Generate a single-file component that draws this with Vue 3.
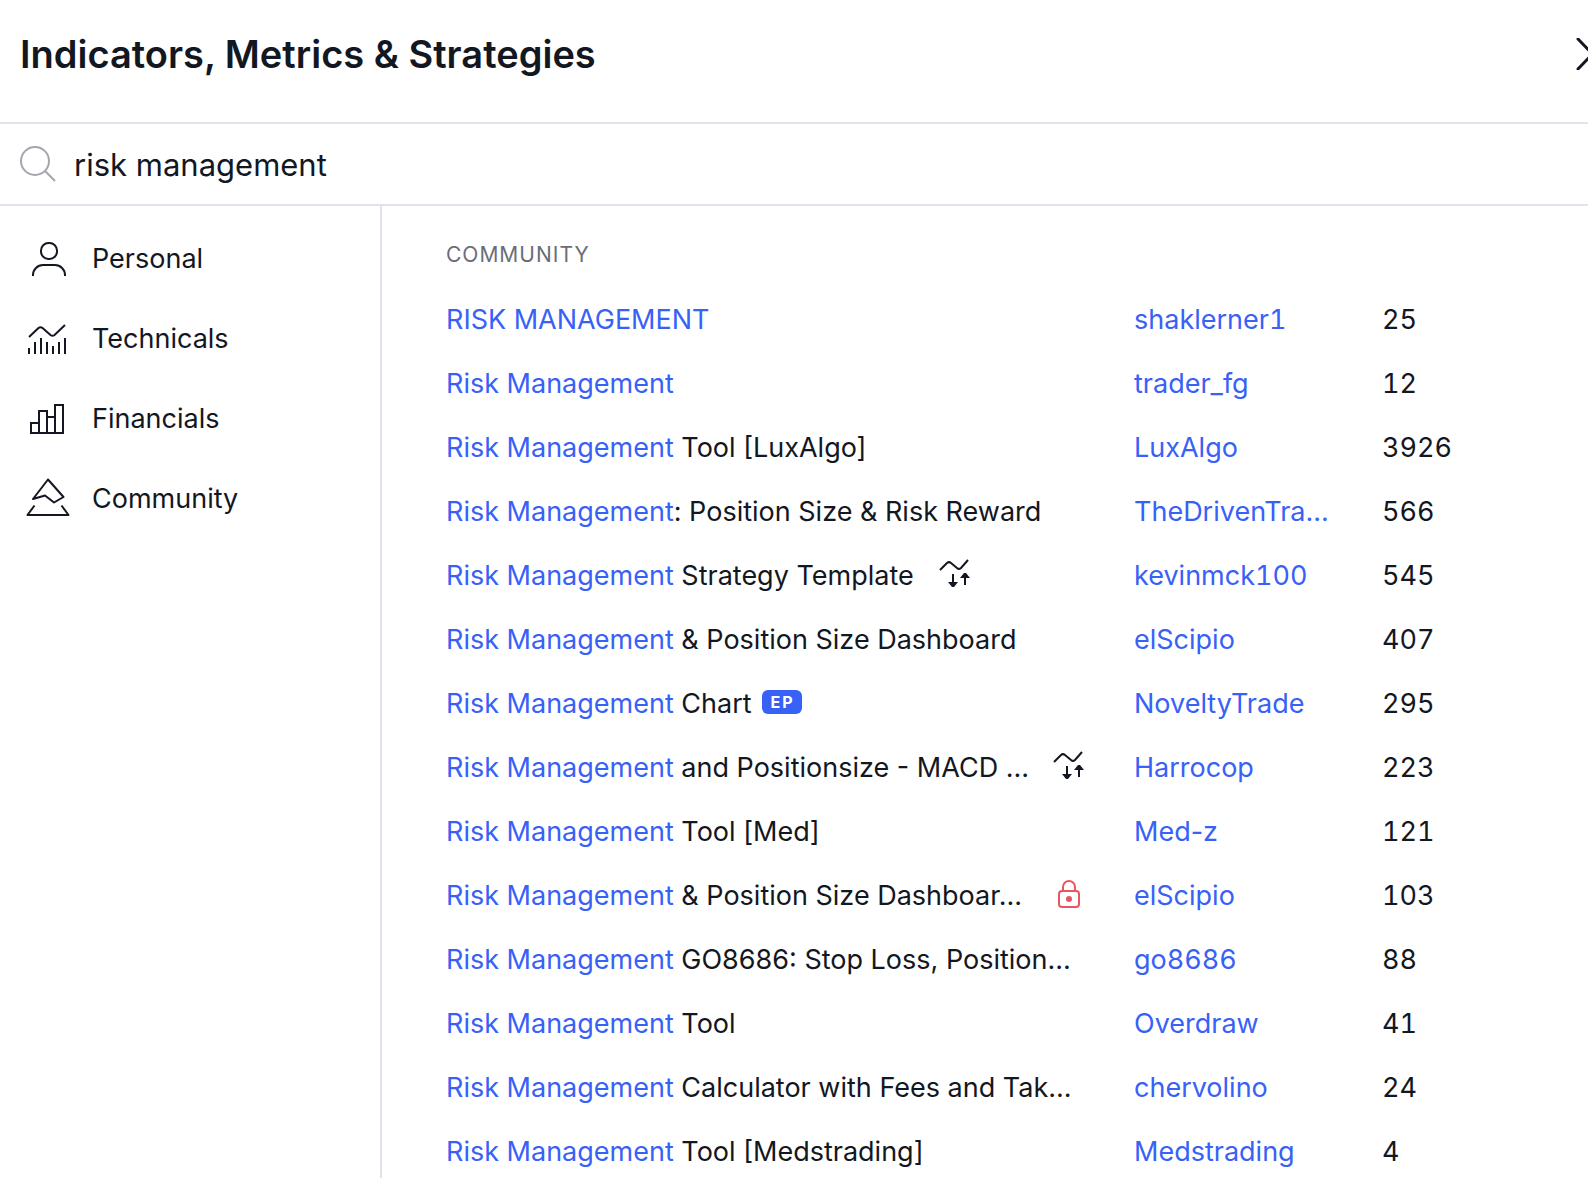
<script setup>
import { ref } from 'vue'

const query = ref('risk management')

const categories = [
  { id: 'personal', label: 'Personal' },
  { id: 'technicals', label: 'Technicals' },
  { id: 'financials', label: 'Financials' },
  { id: 'community', label: 'Community' },
]

const scripts = [
  { match: 'RISK MANAGEMENT', rest: '', author: 'shaklerner1', likes: 25 },
  { match: 'Risk Management', rest: '', author: 'trader_fg', likes: 12 },
  { match: 'Risk Management', rest: ' Tool [LuxAlgo]', author: 'LuxAlgo', likes: 3926 },
  { match: 'Risk Management', rest: ': Position Size & Risk Reward', author: 'TheDrivenTra...', likes: 566 },
  { match: 'Risk Management', rest: ' Strategy Template', author: 'kevinmck100', likes: 545, icon: 'strategy' },
  { match: 'Risk Management', rest: ' & Position Size Dashboard', author: 'elScipio', likes: 407 },
  { match: 'Risk Management', rest: ' Chart', author: 'NoveltyTrade', likes: 295, badge: 'EP' },
  { match: 'Risk Management', rest: ' and Positionsize - MACD ...', author: 'Harrocop', likes: 223, icon: 'strategy', cut: true },
  { match: 'Risk Management', rest: ' Tool [Med]', author: 'Med-z', likes: 121 },
  { match: 'Risk Management', rest: ' & Position Size Dashboar...', author: 'elScipio', likes: 103, icon: 'lock', cut: true },
  { match: 'Risk Management', rest: ' GO8686: Stop Loss, Position...', author: 'go8686', likes: 88 },
  { match: 'Risk Management', rest: ' Tool', author: 'Overdraw', likes: 41 },
  { match: 'Risk Management', rest: ' Calculator with Fees and Tak...', author: 'chervolino', likes: 24 },
  { match: 'Risk Management', rest: ' Tool [Medstrading]', author: 'Medstrading', likes: 4 },
]

const hasDigits = (name) => /\d/.test(name)
</script>

<template>
  <div class="dialog">
    <header class="header">
      <h1>Indicators, Metrics &amp; Strategies</h1>
      <button class="close" type="button" aria-label="Close">
        <svg width="32" height="32" viewBox="0 0 32 32"><path d="M2 1l29 30M31 1L2 31" /></svg>
      </button>
    </header>

    <label class="search">
      <svg width="36" height="36" viewBox="0 0 36 36"><circle cx="15" cy="15" r="14" /><path d="M25 25l10 10" /></svg>
      <input v-model="query" type="text" aria-label="Search" />
    </label>

    <div class="body">
      <nav class="sidebar">
        <button v-for="c in categories" :key="c.id" type="button">
          <svg width="44" height="44" viewBox="0 0 44 44">
            <template v-if="c.id === 'personal'">
              <rect x="15" y="6" width="16" height="16" rx="7.500" />
              <path d="M7 39v-1c0-5.500 4.500-10 10-10h12c5.500 0 10 4.500 10 10v1" />
            </template>
            <template v-else-if="c.id === 'technicals'">
              <path class="thin" d="M3 20L12.500 11q2-1.600 4 0l8 7q2 1.500 4 0L39 8" />
              <path class="crisp" d="M3 37v-6M9 37V25M15 37V21M21 37V25M27 37v-8M33 37V25M39 37V21" />
            </template>
            <template v-else-if="c.id === 'financials'">
              <path class="crisp" d="M5 36V26h8v10M13 36V14h8v22M21 20h8M29 36V8h8v28M4 36h34" />
            </template>
            <template v-else>
              <path class="thin" d="M22 2.500L7 22l12-3.500 9 7 9.500-5.500z M8.500 28.500L1.500 38h41L35.500 28.500" />
            </template>
          </svg>
          <span>{{ c.label }}</span>
        </button>
      </nav>

      <main class="results">
        <h2>Community</h2>
        <table>
          <tbody>
            <tr v-for="(s, i) in scripts" :key="i">
              <td class="name">
                <div class="line">
                  <span class="text" :class="{ cut: s.cut }"><em>{{ s.match }}</em>{{ s.rest }}</span>
                  <span v-if="s.badge" class="badge">{{ s.badge }}</span>
                  <svg v-if="s.icon === 'strategy'" class="mark" width="32" height="32" viewBox="0 0 32 32">
                    <path d="M0 12L7 5q2-1.800 4 0l6 5q2 1.800 4 0L28 2" />
                    <path class="stem" d="M13 16v10M25 27V18" />
                    <path class="head" d="M8 24h10l-4 5h-2zM20 20h10l-4-5h-2z" />
                  </svg>
                  <svg v-else-if="s.icon === 'lock'" class="mark lock" width="32" height="32" viewBox="0 0 32 32">
                    <rect x="5" y="13" width="20" height="16" rx="3" />
                    <path d="M9 13V9a6 6 0 0 1 12 0v4" />
                    <circle cx="15" cy="21" r="3" />
                  </svg>
                </div>
              </td>
              <td class="author" :class="{ tabular: hasDigits(s.author) }"><a href="#">{{ s.author }}</a></td>
              <td class="tabular">{{ s.likes }}</td>
            </tr>
          </tbody>
        </table>
      </main>
    </div>
  </div>
</template>

<style>
body {
  margin: 0;
  background: #fff;
}
</style>

<style scoped>
.dialog {
  display: flex;
  flex-direction: column;
  height: 100vh;
  overflow: hidden;
  color: #131722;
  font: 27px/32px Inter, "Liberation Sans", sans-serif;
}
svg {
  flex: none;
  fill: none;
  stroke: currentColor;
  stroke-width: 2;
}
button {
  padding: 0;
  border: 0;
  background: none;
  color: inherit;
  font: inherit;
}
.header {
  flex: none;
  display: flex;
  align-items: center;
  justify-content: space-between;
  padding: 30px 0 44px 20px;
  border-bottom: 2px solid #e0e3eb;
}
h1 {
  margin: 0;
  font-size: 38px;
  line-height: 48px;
  font-weight: 600;
}
.close {
  display: flex;
  margin-right: -20px;
}
.close svg {
  stroke-width: 3;
  stroke-linecap: round;
}
.search {
  flex: none;
  display: flex;
  align-items: center;
  gap: 18px;
  height: 80px;
  padding-left: 20px;
  border-bottom: 2px solid #e0e3eb;
}
.search svg {
  color: #a3a6af;
}
.search input {
  flex: 1;
  min-width: 0;
  padding: 2px 0 0;
  border: 0;
  outline: 0;
  color: inherit;
  background: none;
  font: 31px/40px Inter, "Liberation Sans", sans-serif;
}
.body {
  flex: 1;
  min-height: 0;
  display: flex;
}
.sidebar {
  flex: none;
  box-sizing: border-box;
  width: 382px;
  padding: 13px 0 0 26px;
  border-right: 2px solid #e0e3eb;
}
.sidebar button {
  display: flex;
  align-items: center;
  gap: 22px;
  width: 100%;
  height: 80px;
}
.thin {
  stroke-linejoin: round;
}
.crisp {
  shape-rendering: crispEdges;
}
.results {
  flex: 1;
  min-width: 0;
  padding: 33px 0 0 64px;
}
h2 {
  margin: 0 0 17px;
  color: #6a6d78;
  font-size: 21px;
  line-height: 32px;
  font-weight: 400;
  letter-spacing: 1px;
  text-transform: uppercase;
}
table {
  width: 100%;
  table-layout: fixed;
  border-collapse: collapse;
}
td {
  height: 64px;
  padding: 0;
  white-space: nowrap;
}
.name {
  width: 688px;
}
.author {
  width: 248px;
}
.tabular {
  font-variant-numeric: tabular-nums;
}
.line {
  display: flex;
  align-items: center;
  width: 640px;
}
.text {
  white-space: pre;
}
.text.cut {
  flex: 1;
  min-width: 0;
}
em,
a {
  color: #3861f6;
  font-style: normal;
  text-decoration: none;
}
.badge {
  margin: 0 0 4px 10px;
  padding: 0 7px 0 9px;
  border-radius: 6px;
  background: #3861f6;
  color: #fff;
  font-size: 16px;
  line-height: 24px;
  font-weight: 700;
  letter-spacing: 2px;
}
.mark {
  margin: 0 0 4px 26px;
  overflow: visible;
}
.stem {
  shape-rendering: crispEdges;
}
.head {
  fill: currentColor;
  stroke: none;
}
.lock {
  color: #eb5560;
}
.lock circle {
  fill: currentColor;
  stroke: none;
}
</style>
